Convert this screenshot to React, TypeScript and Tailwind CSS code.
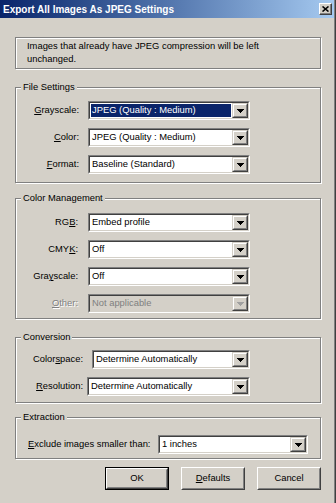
import clsx from "clsx";
import type { ReactNode } from "react";

// win2000 style dialog: "Export All Images As JPEG Settings"

function Accel({ text, u }: { text: string; u: number }) {
    return (
        <>
            {text.slice(0, u)}
            <span className="underline underline-offset-[1px]">{text[u]}</span>
            {text.slice(u + 1)}
        </>
    );
}

function DropArrow({ disabled }: { disabled?: boolean }) {
    return (
        <div className="flex w-[16px] border border-t-[#d4d0c8] border-l-[#d4d0c8] border-r-[#404040] border-b-[#404040] bg-[#d4d0c8]">
            <div className="flex flex-1 items-center justify-center border border-t-white border-l-white border-r-[#808080] border-b-[#808080]">
                <svg width="7" height="4" viewBox="0 0 7 4" shapeRendering="crispEdges">
                    <path
                        d="M0 0h7v1H0zM1 1h5v1H1zM2 2h3v1H2zM3 3h1v1H3z"
                        fill={disabled ? "#a0a0a0" : "#000"}
                    />
                </svg>
            </div>
        </div>
    );
}

type SelectProps = { value: string; selected?: boolean; disabled?: boolean; className?: string };

function Select({ value, selected, disabled, className }: SelectProps) {
    return (
        <div
            className={clsx(
                "flex h-[19px] border border-t-[#808080] border-l-[#808080] border-r-white border-b-white",
                className,
            )}
        >
            <div
                className={clsx(
                    "flex flex-1 border border-t-[#404040] border-l-[#404040] border-r-[#d4d0c8] border-b-[#d4d0c8]",
                    disabled ? "bg-[#d4d0c8]" : "bg-white",
                )}
            >
                <div className="flex min-w-0 flex-1 p-px">
                    <div
                        className={clsx(
                            "flex flex-1 items-center pl-px whitespace-nowrap",
                            selected && "bg-[#0a246a] text-white",
                            disabled && "text-[#808080]",
                        )}
                    >
                        {value}
                    </div>
                </div>
                <DropArrow disabled={disabled} />
            </div>
        </div>
    );
}

function Group({ title, className, children }: { title: string; className?: string; children: ReactNode }) {
    return (
        <div
            className={clsx(
                "flex flex-col border border-[#808080] shadow-[inset_1px_1px_0_#fff,1px_1px_0_#fff]",
                className,
            )}
        >
            <div className="-mt-[8px] ml-[5px] w-fit bg-[#d4d0c8] px-[2px] leading-[14px]">{title}</div>
            {children}
        </div>
    );
}

function Button({ children, isDefault }: { children: ReactNode; isDefault?: boolean }) {
    return (
        <div className={clsx("flex h-[23px] w-[64px]", isDefault && "border border-black")}>
            <div className="flex flex-1 border border-t-white border-l-white border-r-[#404040] border-b-[#404040]">
                <div className="flex flex-1 items-center justify-center border border-t-[#d4d0c8] border-l-[#d4d0c8] border-r-[#808080] border-b-[#808080]">
                    {children}
                </div>
            </div>
        </div>
    );
}

export default function App() {
    return (
        <div className="flex h-[503px] w-[336px] bg-[#d4d0c8] font-['Liberation_Sans',Arial,sans-serif] text-[9.4px] text-black">
            <div className="flex flex-1 border-r border-r-[#404040]">
                <div className="flex flex-1 flex-col border-r border-r-[#808080]">
                    <div className="flex h-[18px] items-center justify-between bg-linear-to-r from-[#0a246a] to-[#a6caf0] pr-[2px] pl-[3px]">
                        <span className="text-[10px] font-bold text-white">Export All Images As JPEG Settings</span>
                        <div className="flex h-[12px] w-[13px] border border-t-white border-l-white border-r-[#404040] border-b-[#404040] bg-[#d4d0c8]">
                            <div className="flex flex-1 items-center justify-center border-r border-b border-r-[#808080] border-b-[#808080]">
                                <svg width="7" height="6" viewBox="0 0 7 6">
                                    <path d="M0.5 0.5L6.5 5.5M6.5 0.5L0.5 5.5" stroke="#000" strokeWidth="1.6" />
                                </svg>
                            </div>
                        </div>
                    </div>

                    <div className="flex flex-col pr-[13px] pl-[15px]">
                        <div className="mt-[19px] h-[32px] border border-[#808080] pt-[1px] pl-[11px] leading-[13px] shadow-[inset_1px_1px_0_#fff,1px_1px_0_#fff]">
                            Images that already have JPEG compression will be left
                            <br />
                            unchanged.
                        </div>

                        <Group title="File Settings" className="mt-[18px]">
                            <div className="mt-[7px] mb-[8px] flex flex-col gap-[8px]">
                                <div className="flex items-center">
                                    <span className="w-[63px] text-right">
                                        <Accel text="Grayscale:" u={0} />
                                    </span>
                                    <Select className="ml-[9px] w-[162px]" value="JPEG (Quality : Medium)" selected />
                                </div>
                                <div className="flex items-center">
                                    <span className="w-[63px] text-right">
                                        <Accel text="Color:" u={0} />
                                    </span>
                                    <Select className="ml-[9px] w-[162px]" value="JPEG (Quality : Medium)" />
                                </div>
                                <div className="flex items-center">
                                    <span className="w-[63px] text-right">
                                        <Accel text="Format:" u={0} />
                                    </span>
                                    <Select className="ml-[9px] w-[162px]" value="Baseline (Standard)" />
                                </div>
                            </div>
                        </Group>

                        <Group title="Color Management" className="mt-[15px]">
                            <div className="mt-[8px] mb-[5px] flex flex-col gap-[8px]">
                                <div className="flex items-center">
                                    <span className="w-[62px] text-right">
                                        <Accel text="RGB:" u={2} />
                                    </span>
                                    <Select className="ml-[10px] w-[162px]" value="Embed profile" />
                                </div>
                                <div className="flex items-center">
                                    <span className="w-[62px] text-right">
                                        <Accel text="CMYK:" u={3} />
                                    </span>
                                    <Select className="ml-[10px] w-[162px]" value="Off" />
                                </div>
                                <div className="flex items-center">
                                    <span className="w-[62px] text-right">
                                        <Accel text="Grayscale:" u={3} />
                                    </span>
                                    <Select className="ml-[10px] w-[162px]" value="Off" />
                                </div>
                                <div className="flex items-center">
                                    <span className="w-[62px] text-right text-[#808080] [text-shadow:1px_1px_0_#fff]">
                                        <Accel text="Other:" u={0} />
                                    </span>
                                    <Select className="ml-[10px] w-[162px]" value="Not applicable" disabled />
                                </div>
                            </div>
                        </Group>

                        <Group title="Conversion" className="mt-[18px]">
                            <div className="mt-[6px] mb-[6px] flex flex-col gap-[8px]">
                                <div className="flex items-center">
                                    <span className="w-[67px] text-right">
                                        <Accel text="Colorspace:" u={5} />
                                    </span>
                                    <Select className="ml-[9px] w-[158px]" value="Determine Automatically" />
                                </div>
                                <div className="flex items-center">
                                    <span className="w-[67px] text-right">
                                        <Accel text="Resolution:" u={0} />
                                    </span>
                                    <Select className="ml-[4px] w-[163px]" value="Determine Automatically" />
                                </div>
                            </div>
                        </Group>

                        <Group title="Extraction" className="mt-[14px]">
                            <div className="mt-[11px] mb-[4px] flex items-center pl-[12px]">
                                <span className="w-[130px]">
                                    <Accel text="Exclude images smaller than:" u={0} />
                                </span>
                                <Select className="w-[150px]" value="1 inches" />
                            </div>
                        </Group>

                        <div className="mt-[8px] flex justify-end gap-[12px]">
                            <Button isDefault>OK</Button>
                            <Button>
                                <Accel text="Defaults" u={0} />
                            </Button>
                            <Button>Cancel</Button>
                        </div>
                    </div>
                </div>
            </div>
        </div>
    );
}
